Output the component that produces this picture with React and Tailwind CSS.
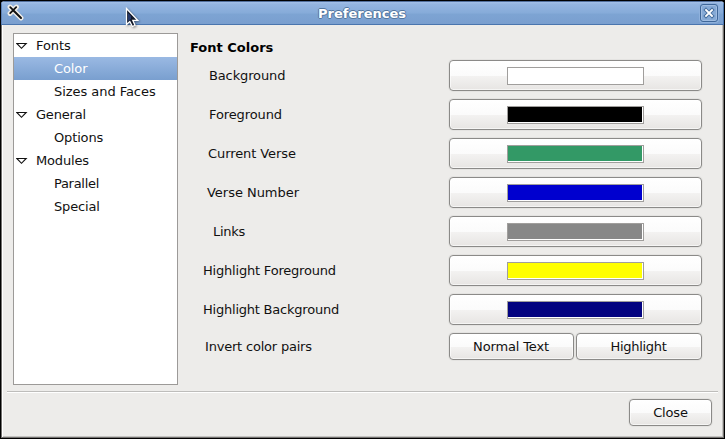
import React from 'react';

const tree = [
  { label: 'Fonts', parent: true, track: 'tracking-[-0.05px]' },
  { label: 'Color', selected: true, track: 'tracking-[-0.1px]' },
  { label: 'Sizes and Faces', track: 'tracking-[-0.05px]' },
  { label: 'General', parent: true, track: 'tracking-[-0.2px]' },
  { label: 'Options', track: 'tracking-[-0.15px]' },
  { label: 'Modules', parent: true, track: 'tracking-[-0.15px]' },
  { label: 'Parallel', track: 'tracking-[-0.3px]' },
  { label: 'Special', track: 'tracking-[-0.15px]' },
];

const colors = [
  { label: 'Background', fill: 'bg-white', text: 'pl-[19px] tracking-[-0.13px]' },
  { label: 'Foreground', fill: 'bg-black', text: 'pl-[19px] tracking-[-0.1px]' },
  { label: 'Current Verse', fill: 'bg-[#339966]', text: 'pl-[18px] tracking-[-0.08px]' },
  { label: 'Verse Number', fill: 'bg-[#0000cf]', text: 'pl-[17px] tracking-[-0.03px]' },
  { label: 'Links', fill: 'bg-[#878787]', text: 'pl-[23px] tracking-[-0.25px]' },
  { label: 'Highlight Foreground', fill: 'bg-[#ffff00]', text: 'pl-[13px] tracking-[-0.2px]' },
  { label: 'Highlight Background', fill: 'bg-[#030380]', text: 'pl-[13px] tracking-[-0.22px]' },
];

function Button({ className, children }) {
  return (
    <button
      className={`flex shrink-0 items-center justify-center rounded-[4px] border border-[#8b8a88] bg-[linear-gradient(#ffffff_0%,#fbfbfb_50%,#f3f2f1_52%,#e7e5e3_100%)] shadow-[0_0_0_1px_#e4e3e1,inset_0_0_0_1px_rgba(255,255,255,0.6)] ${className}`}
    >
      {children}
    </button>
  );
}

function Expander() {
  return (
    <svg className="ml-[2px] mr-[8px] h-[8px] w-[12px] shrink-0" viewBox="0 0 12 8">
      <path d="M0.8 1.5H10.2L5.5 6.3Z" fill="#fff" stroke="#111" strokeWidth="1.1" />
    </svg>
  );
}

function ToolIcon() {
  return (
    <svg className="h-[18px] w-[18px]" viewBox="0 0 18 18" fill="none" strokeLinecap="round">
      <path d="M4 3L15 14M10.5 3L4 9.5" stroke="#f1eee8" strokeWidth="4.8" />
      <path d="M4.2 3.2L7.2 6.2M10.2 3.2L4.2 9.2" stroke="#111" strokeWidth="1.8" />
      <path d="M7.2 6.2L15 14" stroke="#111" strokeWidth="2" />
    </svg>
  );
}

function Pointer() {
  return (
    <svg className="absolute left-[125px] top-[7px] h-[22px] w-[14px] drop-shadow-[1px_1px_1px_rgba(0,0,0,0.4)]" viewBox="0 0 14 22">
      <path d="M1.5 1.5V17.5L4.8 14.5L7.4 19.5L10 18.3L7.8 13.3H12.6Z" fill="#101727" stroke="#fff" strokeWidth="1.3" />
      <path d="M3 6L6 9V12L3 14Z" fill="#253869" />
    </svg>
  );
}

export default function App() {
  return (
    <div className="relative h-[439px] w-[725px] overflow-hidden border border-black bg-black font-['DejaVu_Sans',sans-serif] text-[13px] leading-[15px] text-[#111]">
      <div className="flex h-[437px] flex-col overflow-hidden rounded-t-[4px] bg-[#edecea]">
        <header className="flex h-[24px] shrink-0 items-center border-b border-t border-b-[#4a75ae] border-t-[#52709d] bg-[linear-gradient(#a4c0e8_0%,#94b5e0_10%,#86abd9_50%,#7da4d3_55%,#7a9fcf_100%)] pl-[5px] pr-[6px] shadow-[inset_1px_0_#5b80b5,inset_-1px_0_#4a75ae]">
          <ToolIcon />
          <h1 className="flex-1 text-center font-bold text-white [text-shadow:1px_0_#54779f,-1px_0_#54779f,0_1px_#54779f,0_-1px_#54779f]">
            Preferences
          </h1>
          <button className="flex h-[18px] w-[18px] items-center justify-center rounded-[3px] border border-[#3f6799] bg-[#86aad6] shadow-[inset_0_0_0_1px_#a0bde2,0_0_0_1px_#8fb1dc]">
            <svg className="h-[12px] w-[12px]" viewBox="0 0 12 12" strokeLinecap="square">
              <path d="M3 3L9 9M9 3L3 9" stroke="#476f9f" strokeWidth="3.8" />
              <path d="M3 3L9 9M9 3L3 9" stroke="#fff" strokeWidth="1.8" />
            </svg>
          </button>
        </header>

        <div className="flex min-h-0 flex-1 flex-col border-b border-l border-r border-[#73716f] shadow-[inset_1px_0_#ffffff,inset_-1px_0_#c3c2c0,inset_0_-1px_#c3c2c0]">
          <main className="flex pl-[11px] pt-[8px]">
            <nav className="h-[352px] w-[165px] shrink-0 border border-[#9c9a98] bg-white">
              {tree.map((item) => (
                <div
                  key={item.label}
                  className={`flex h-[23px] items-center whitespace-nowrap ${item.track} ${item.parent ? '' : 'pl-[40px]'} ${item.selected ? 'bg-[linear-gradient(#9ab9e3,#799fcf)] text-white' : ''}`}
                >
                  {item.parent && <Expander />}
                  {item.label}
                </div>
              ))}
            </nav>

            <section className="ml-[12px] w-[512px] pt-[7px]">
              <h2 className="h-[16px] font-bold text-black">Font Colors</h2>
              <div className="flex flex-col gap-[8px] pt-[4px]">
                {colors.map((row) => (
                  <div key={row.label} className="flex h-[31px] items-center">
                    <span className={`w-[259px] whitespace-nowrap ${row.text}`}>{row.label}</span>
                    <Button className="h-[31px] w-[253px]">
                      <span className="block h-[18px] w-[137px] border border-[#a09e9c] bg-white pb-px pr-px">
                        <span className={`block h-full w-full ${row.fill}`} />
                      </span>
                    </Button>
                  </div>
                ))}
              </div>
              <div className="flex h-[27px] items-center pt-[16px]">
                <span className="w-[259px] pl-[15px] tracking-[-0.2px]">Invert color pairs</span>
                <Button className="h-[27px] w-[125px] pr-px tracking-[-0.15px]">Normal Text</Button>
                <Button className="ml-[2px] h-[27px] w-[126px] pr-px tracking-[-0.3px]">Highlight</Button>
              </div>
            </section>
          </main>
          <div className="ml-[5px] mr-[5px] mt-[6px] h-[2px] border-b border-t border-b-white border-t-[#bebdbb]" />
          <footer className="flex justify-end pr-[11px] pt-[6px]">
            <Button className="h-[27px] w-[83px] tracking-[-0.15px]">Close</Button>
          </footer>
        </div>
      </div>
      <div className="absolute -left-px -top-px">
        <Pointer />
      </div>
    </div>
  );
}
